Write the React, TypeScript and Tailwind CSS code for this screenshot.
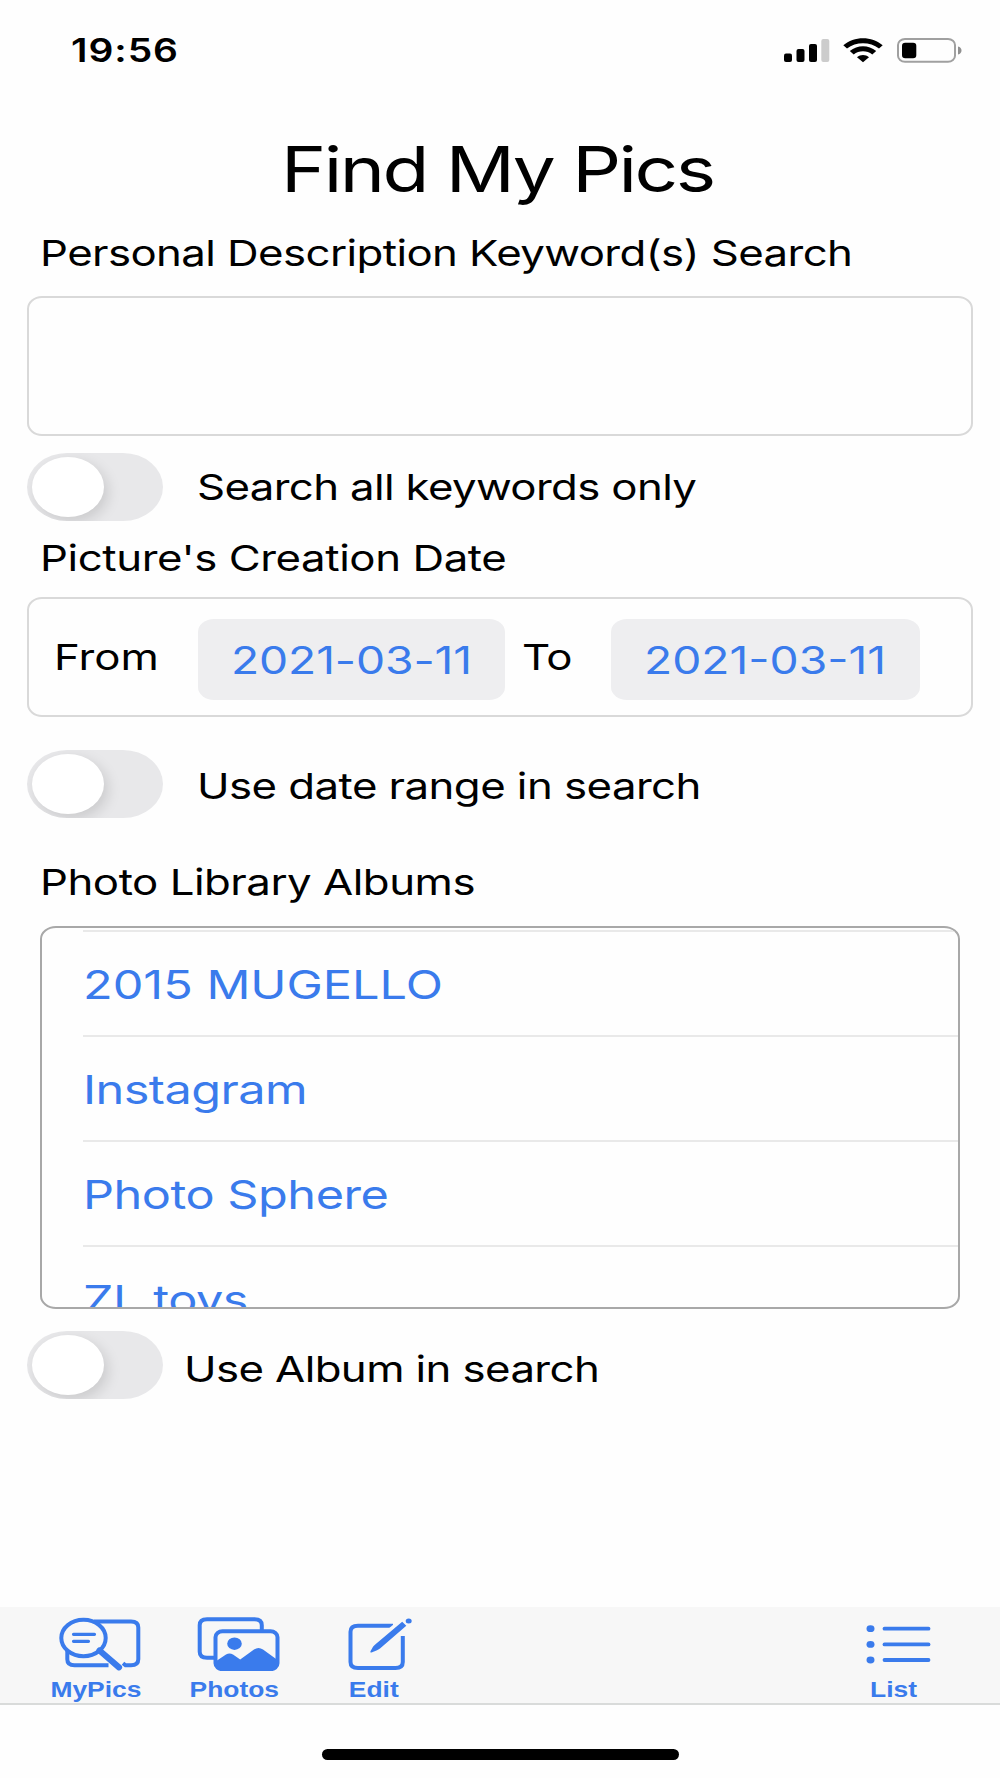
import React, { useState } from 'react';
import clsx from 'clsx';

const albums = [
  { name: '2015 MUGELLO', tracking: 'tracking-normal' },
  { name: 'Instagram', tracking: 'tracking-[-0.45px]' },
  { name: 'Photo Sphere', tracking: 'tracking-[-0.4px]' },
  { name: 'ZL toys', tracking: 'tracking-[-0.4px]' },
];

// All copy is set in a slightly expanded face
function Label({ children, className }: { children: React.ReactNode; className?: string }) {
  return (
    <span className={clsx('inline-block origin-left scale-x-[1.216] whitespace-nowrap leading-none', className)}>
      {children}
    </span>
  );
}

function Toggle({ checked, onChange, label }: { checked: boolean; onChange: (v: boolean) => void; label: string }) {
  return (
    <button
      role="switch"
      aria-checked={checked}
      aria-label={label}
      onClick={() => onChange(!checked)}
      className={clsx(
        'flex h-[68px] w-[136px] shrink-0 items-center overflow-hidden rounded-[40px/34px] px-[5px]',
        checked ? 'justify-end bg-green-500' : 'bg-[#e8e8ea]'
      )}
    >
      <span className="h-[60px] w-[72px] rounded-[50%] bg-white shadow-[4px_5px_14px_rgba(0,0,0,0.13)]" />
    </button>
  );
}

function StatusIcons() {
  return (
    <div className="flex items-center">
      <svg width="46" height="25" viewBox="0 0 46 25">
        <rect x="0" y="15.5" width="8" height="8.5" rx="2" />
        <rect x="12.5" y="11" width="8" height="13" rx="2" />
        <rect x="25" y="6" width="8" height="18" rx="2" />
        <rect x="37.3" y="1" width="8" height="23" rx="2" fill="#cccccc" />
      </svg>
      <svg width="40" height="25" viewBox="0 0 40 25" className="ml-[13px]">
        <path d="M0.3 7.2C11-2.2 29-2.2 39.7 7.2L36 10.5C27 3.4 13 3.4 4 10.5Z" />
        <path d="M6.8 13C14.500 6.600 25.500 6.600 33.200 13L29.300 16.400C24 12.300 16 12.300 10.700 16.400Z" />
        <path d="M14 19.200C17.500 16.300 22.500 16.300 26 19.200L20 24.300Z" />
      </svg>
      <svg width="66" height="25" viewBox="0 0 66 25" className="ml-[14px]">
        <rect x="1" y="1" width="57" height="22.800" rx="7" ry="6" fill="none" stroke="#a0a0a0" strokeWidth="2" />
        <rect x="5" y="4.700" width="14.300" height="15.500" rx="3.200" />
        <path d="M61 8.500C65.700 9.500 65.700 15.500 61 16.500Z" fill="#909090" />
      </svg>
    </div>
  );
}

function MyPicsIcon() {
  return (
    <svg width="139" height="64" viewBox="0 0 139 64" fill="none" stroke="currentColor" strokeWidth="4">
      <ellipse cx="57.500" cy="31" rx="22.200" ry="18.200" />
      <path d="M47.500 27.300H68.500M47.500 34.300H62.500" strokeWidth="3.200" strokeLinecap="round" />
      <path d="M68 14.500H105Q112.300 14.500 112.300 20.500V52.300Q112.300 58.300 105 58.300H99.500L97 56.300" />
      <path d="M41.300 44V52.300Q41.300 58.300 48.500 58.300H82.500" />
      <path d="M73.500 43.500L93 60.300" strokeWidth="6.200" strokeLinecap="round" />
    </svg>
  );
}

function PhotosIcon() {
  return (
    <svg width="139" height="64" viewBox="0 0 139 64" fill="none" stroke="currentColor" strokeWidth="4">
      <path d="M50 50.700H42Q34.700 50.700 34.700 44.700V18.300Q34.700 12.300 42 12.300H89.500Q96.800 12.300 96.800 18.300V24" />
      <rect x="50.500" y="24.200" width="62" height="38" rx="7" ry="6" />
      <ellipse cx="69.500" cy="36.700" rx="7.300" ry="6.200" fill="currentColor" stroke="none" />
      <path
        d="M50.500 54.500L61 47.500Q64.500 45.500 68 47.500L75.200 52.500L89 42.500Q93.500 39.500 98 42.500L112.500 53V58Q112 62 107 62H56Q51 62 50.500 58Z"
        fill="currentColor"
        stroke="none"
      />
    </svg>
  );
}

function EditIcon() {
  return (
    <svg width="139" height="64" viewBox="0 0 139 64" fill="none" stroke="currentColor" strokeWidth="4">
      <path d="M89 18.700H54Q46.500 18.700 46.500 24.700V55Q46.500 61 54 61H91.500Q98.800 61 98.800 55V29" />
      <path
        d="M98.200 14.800L102.300 18.800L76 41.500Q74.500 42.700 72.500 43.500L67.500 45.500Q65.700 45.800 66.500 44.200L69 39.800Q70 38.500 71.500 37.200Z"
        fill="#f7f7f7"
        stroke="#f7f7f7"
        strokeWidth="7"
      />
      <path
        d="M98.200 14.800L102.300 18.800L76 41.500Q74.500 42.700 72.500 43.500L67.500 45.500Q65.700 45.800 66.500 44.200L69 39.800Q70 38.500 71.500 37.200Z"
        fill="currentColor"
        stroke="none"
      />
      <ellipse cx="104.700" cy="14" rx="3" ry="2.500" fill="currentColor" stroke="none" />
    </svg>
  );
}

function ListIcon() {
  return (
    <svg width="139" height="64" viewBox="0 0 139 64" fill="currentColor">
      {[21.7, 37.4, 53].map((y) => (
        <g key={y}>
          <ellipse cx="46.500" cy={y} rx="4" ry="3.400" />
          <path d={`M60.500 ${y}H104.500`} stroke="currentColor" strokeWidth="3.8" strokeLinecap="round" />
        </g>
      ))}
    </svg>
  );
}

function TabButton({ icon, label }: { icon: React.ReactNode; label: string }) {
  return (
    <button className="flex w-[139px] flex-col items-center">
      {icon}
      <span className="mt-2 inline-block scale-x-[1.2] font-['Liberation_Sans',sans-serif] text-[22px] leading-[22px] font-bold">
        {label}
      </span>
    </button>
  );
}

export default function App() {
  const [allKeywords, setAllKeywords] = useState(false);
  const [useDates, setUseDates] = useState(false);
  const [useAlbum, setUseAlbum] = useState(false);

  return (
    <div className="flex h-[1778px] w-[1000px] flex-col overflow-hidden bg-[#fefefe] font-[Inter,sans-serif] text-[36px] text-black">
      {/* Status bar */}
      <div className="flex h-[101px] shrink-0 items-center justify-between pr-[37px] pl-[71px]">
        <Label className="mt-px text-[32px] font-semibold tracking-[0.8px]">19:56</Label>
        <StatusIcons />
      </div>

      <main className="flex flex-col px-[27px]">
        <h1 className="flex h-[136px] items-center pl-[254px]">
          <Label className="text-[63px] tracking-[-2.1px]">Find My Pics</Label>
        </h1>

        <div className="flex h-8 items-center pl-[13px]">
          <Label className="tracking-[-0.49px]">Personal Description Keyword(s) Search</Label>
        </div>
        <div className="mt-[27px] h-[140px] rounded-[15px/13px] border-2 border-[#d9d9d9]" />

        <div className="mt-[17px] flex items-center">
          <Toggle checked={allKeywords} onChange={setAllKeywords} label="Search all keywords only" />
          <Label className="ml-[34px] tracking-[-0.53px]">Search all keywords only</Label>
        </div>

        <div className="mt-[19px] flex h-9 items-center pl-[13px]">
          <Label className="tracking-[-0.35px]">Picture's Creation Date</Label>
        </div>
        <div className="mt-[21px] flex h-[120px] items-center rounded-[15px/13px] border-2 border-[#d9d9d9] pl-[25px]">
          <div className="w-[144px]">
            <Label>From</Label>
          </div>
          <div className="mt-1 flex h-[81px] w-[307px] items-center rounded-[16px/13px] bg-[#eeeef0] pt-[2px] pl-[33px] text-[#3a7bec]">
            <Label className="text-[38px] tracking-[-0.1px]">2021-03-11</Label>
          </div>
          <div className="w-[106px] pl-[17px]">
            <Label className="tracking-[-0.5px]">To</Label>
          </div>
          <div className="mt-1 flex h-[81px] w-[309px] items-center rounded-[16px/13px] bg-[#eeeef0] pt-[2px] pl-[33px] text-[#3a7bec]">
            <Label className="text-[38px]">2021-03-11</Label>
          </div>
        </div>

        <div className="mt-[33px] flex items-center">
          <Toggle checked={useDates} onChange={setUseDates} label="Use date range in search" />
          <Label className="mt-1 ml-[34px] tracking-[-0.46px]">Use date range in search</Label>
        </div>

        <div className="mt-[46px] flex h-9 items-center pl-[13px]">
          <Label className="tracking-[-0.4px]">Photo Library Albums</Label>
        </div>
        <div className="mx-[13px] mt-[26px] h-[383px] overflow-hidden rounded-[16px/13px] border-2 border-[#a8a8a8] pt-[2px] pl-[41px]">
          {albums.map((album) => (
            <div
              key={album.name}
              className="flex h-[105px] items-center border-t-2 border-[#e9e9e9] pt-[2px] text-[40px] text-[#3a7bec]"
            >
              <Label className={album.tracking}>{album.name}</Label>
            </div>
          ))}
        </div>

        <div className="mt-[22px] flex items-center">
          <Toggle checked={useAlbum} onChange={setUseAlbum} label="Use Album in search" />
          <Label className="mt-2 ml-[21px] tracking-[-0.5px]">Use Album in search</Label>
        </div>
      </main>

      {/* Bottom toolbar */}
      <nav className="mt-auto flex h-[98px] shrink-0 border-b-2 border-[#d9dbda] bg-[#f7f7f7] pr-[37px] pl-[26px] text-[#3a7bec]">
        <TabButton icon={<MyPicsIcon />} label="MyPics" />
        <TabButton icon={<PhotosIcon />} label="Photos" />
        <TabButton icon={<EditIcon />} label="Edit" />
        <div className="grow" />
        <TabButton icon={<ListIcon />} label="List" />
      </nav>

      <div className="flex h-[73px] shrink-0 justify-center pt-[44px]">
        <div className="h-[11px] w-[357px] rounded-full bg-black" />
      </div>
    </div>
  );
}
